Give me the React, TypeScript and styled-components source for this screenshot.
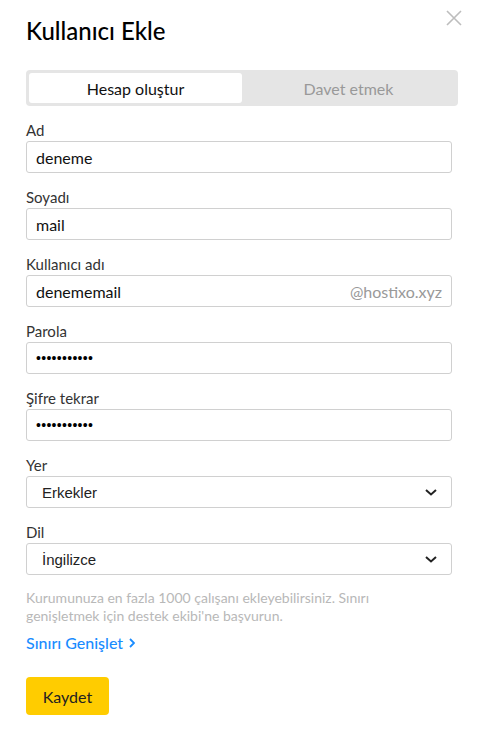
import { createGlobalStyle, styled } from "styled-components";

const GlobalStyle = createGlobalStyle`
  html, body {
    margin: 0;
    padding: 0;
    background: #fff;
  }
  body {
    font-family: Lato, "Noto Sans", Arial, sans-serif;
    color: #000;
  }
  * {
    box-sizing: border-box;
  }
`;

const Modal = styled.div`
  position: relative;
  width: 482px;
  min-height: 743px;
  padding: 16px 24px 0 26px;
`;

const CloseButton = styled.button`
  position: absolute;
  top: 9px;
  right: 19px;
  width: 18px;
  height: 18px;
  padding: 0;
  border: none;
  background: none;
  cursor: pointer;
  display: flex;
  align-items: center;
  justify-content: center;
`;

const Title = styled.h1`
  margin: 0;
  font-size: 24px;
  line-height: 30px;
  font-weight: 500;
  color: #000;
`;

const Tabs = styled.div`
  margin-top: 24px;
  width: 432px;
  height: 36px;
  padding: 3px;
  border-radius: 4px;
  background: #e5e5e5;
  display: grid;
  grid-template-columns: 1fr 1fr;
`;

const Tab = styled.div<{ $active?: boolean }>`
  display: flex;
  align-items: center;
  justify-content: center;
  border-radius: 3px;
  font-size: 16px;
  background: ${(p) => (p.$active ? "#fff" : "transparent")};
  color: ${(p) => (p.$active ? "#111" : "#999")};
`;

const Form = styled.div`
  margin-top: 14px;
  width: 426px;
`;

const Field = styled.div`
  margin-bottom: 14px;
`;

const Label = styled.div`
  font-size: 15px;
  line-height: 20px;
  color: #333;
  margin-bottom: 1px;
`;

const InputBox = styled.div`
  height: 32px;
  border: 1px solid #d0d0d0;
  border-radius: 3px;
  padding: 0 9px;
  display: flex;
  align-items: center;
  justify-content: space-between;
  font-size: 16px;
  color: #111;
`;

const Suffix = styled.span`
  color: #999;
  font-size: 16px;
`;

const Dots = styled.span`
  font-family: "Liberation Sans", Arial, sans-serif;
  font-size: 14px;
  letter-spacing: 0.3px;
  color: #000;
`;

const SelectBox = styled.div`
  height: 32px;
  border: 1px solid #d0d0d0;
  border-radius: 3px;
  padding: 0 14px 0 15px;
  display: flex;
  align-items: center;
  justify-content: space-between;
  font-family: "Liberation Sans", Arial, sans-serif;
  font-size: 15px;
  color: #222;
`;

const Help = styled.p`
  margin: 1px 0 0;
  max-width: 400px;
  font-size: 14px;
  line-height: 18px;
  color: #b8b8b8;
`;

const Link = styled.a`
  display: inline-flex;
  align-items: center;
  gap: 6px;
  margin-top: 8px;
  font-size: 16px;
  line-height: 20px;
  font-weight: 500;
  color: #1a8cff;
  text-decoration: none;
`;

const SaveButton = styled.button`
  display: block;
  margin-top: 24px;
  width: 83px;
  height: 38px;
  border: none;
  border-radius: 4px;
  background: #ffcc00;
  font-family: Lato, "Noto Sans", Arial, sans-serif;
  font-size: 16px;
  color: #222;
  cursor: pointer;
`;

const Chevron = () => (
  <svg width="12" height="7" viewBox="0 0 12 7" fill="none">
    <path d="M1 1l5 4.5L11 1" stroke="#222" strokeWidth="2" />
  </svg>
);

const fields = [
  { label: "Ad", value: "deneme" },
  { label: "Soyadı", value: "mail" },
  { label: "Kullanıcı adı", value: "denememail", suffix: "@hostixo.xyz" },
  { label: "Parola", password: true },
  { label: "Şifre tekrar", password: true },
];

const selects = [
  { label: "Yer", value: "Erkekler" },
  { label: "Dil", value: "İngilizce" },
];

export default function App() {
  return (
    <>
      <GlobalStyle />
      <Modal>
        <CloseButton aria-label="Kapat">
          <svg width="16" height="16" viewBox="0 0 16 16">
            <path d="M1 1l14 14M15 1L1 15" stroke="#bdbdbd" strokeWidth="1.6" />
          </svg>
        </CloseButton>
        <Title>Kullanıcı Ekle</Title>
        <Tabs>
          <Tab $active>Hesap oluştur</Tab>
          <Tab>Davet etmek</Tab>
        </Tabs>
        <Form>
          {fields.map((f) => (
            <Field key={f.label}>
              <Label>{f.label}</Label>
              <InputBox>
                {f.password ? <Dots>{"•".repeat(11)}</Dots> : <span>{f.value}</span>}
                {f.suffix && <Suffix>{f.suffix}</Suffix>}
              </InputBox>
            </Field>
          ))}
          {selects.map((s) => (
            <Field key={s.label}>
              <Label>{s.label}</Label>
              <SelectBox>
                <span>{s.value}</span>
                <Chevron />
              </SelectBox>
            </Field>
          ))}
          <Help>
            Kurumunuza en fazla 1000 çalışanı ekleyebilirsiniz. Sınırı genişletmek için destek
            ekibi'ne başvurun.
          </Help>
          <Link href="#">
            Sınırı Genişlet
            <svg width="6" height="10" viewBox="0 0 6 10" fill="none">
              <path d="M1 1l4 4-4 4" stroke="#1a8cff" strokeWidth="1.8" />
            </svg>
          </Link>
          <SaveButton>Kaydet</SaveButton>
        </Form>
      </Modal>
    </>
  );
}
